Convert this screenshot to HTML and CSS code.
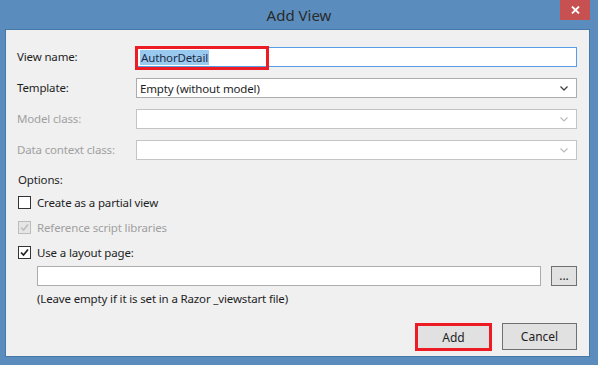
FILE: index.html
```html
<!DOCTYPE html>
<html lang="en">
<head>
  <meta charset="UTF-8">
  <title>Add View</title>
  <link rel="stylesheet" href="styles.css">
</head>
<body>
  <div class="janela">
    <div class="barra-titulo">
      <span class="titulo">Add View</span>
      <button class="fechar">
        <svg width="9" height="8" viewBox="0 0 9 8"><path d="M1 0.5 L8 7.5 M8 0.5 L1 7.5" stroke="#fff" stroke-width="1.8"/></svg>
      </button>
    </div>

    <div class="cliente">
      <div class="campos">
        <span class="rotulo">View name:</span>
        <div class="caixa caixa-ativa">
          <span class="selecionado">AuthorDetail</span>
          <span class="destaque destaque-nome"></span>
        </div>

        <span class="rotulo">Template:</span>
        <div class="caixa lista">
          <span>Empty (without model)</span>
          <svg class="seta" width="8" height="5" viewBox="0 0 8 5"><path d="M0.5 0.5 L4 4 L7.5 0.5" fill="none" stroke="#444" stroke-width="1.3"/></svg>
        </div>

        <span class="rotulo desativado">Model class:</span>
        <div class="caixa lista caixa-desativada">
          <span></span>
          <svg class="seta" width="8" height="5" viewBox="0 0 8 5"><path d="M0.5 0.5 L4 4 L7.5 0.5" fill="none" stroke="#bbb" stroke-width="1.2"/></svg>
        </div>

        <span class="rotulo desativado">Data context class:</span>
        <div class="caixa lista caixa-desativada">
          <span></span>
          <svg class="seta" width="8" height="5" viewBox="0 0 8 5"><path d="M0.5 0.5 L4 4 L7.5 0.5" fill="none" stroke="#bbb" stroke-width="1.2"/></svg>
        </div>
      </div>

      <div class="opcoes">
        <div class="opcoes-titulo">Options:</div>

        <div class="linha-opcao">
          <span class="marcador"></span>
          <span>Create as a partial view</span>
        </div>

        <div class="linha-opcao desativado">
          <span class="marcador marcador-desativado">
            <svg width="11" height="11" viewBox="0 0 11 11"><path d="M2 5.5 L4.5 8 L9 2.5" fill="none" stroke="#bdbdbd" stroke-width="1.6"/></svg>
          </span>
          <span>Reference script libraries</span>
        </div>

        <div class="linha-opcao">
          <span class="marcador">
            <svg width="11" height="11" viewBox="0 0 11 11"><path d="M2 5.5 L4.5 8 L9 2.5" fill="none" stroke="#222" stroke-width="1.7"/></svg>
          </span>
          <span>Use a layout page:</span>
        </div>

        <div class="linha-layout">
          <div class="caixa caixa-layout"></div>
          <button class="botao botao-pequeno">...</button>
        </div>

        <div class="nota">(Leave empty if it is set in a Razor _viewstart file)</div>
      </div>

      <div class="rodape">
        <button class="botao botao-add">Add</button>
        <button class="botao">Cancel</button>
      </div>
    </div>
  </div>
</body>
</html>
```

FILE: styles.css
```css
body {
  margin: 0;
  font-family: 'Noto Sans', sans-serif;
  font-size: 11.5px;
  letter-spacing: -0.15px;
  color: #1e1e1e;
  background: #5a8dbe;
}

.janela {
  width: 598px;
  height: 365px;
  display: flex;
  flex-direction: column;
}

.barra-titulo {
  height: 29px;
  display: flex;
  justify-content: center;
  align-items: center;
  position: relative;
}

.titulo {
  font-size: 15px;
  letter-spacing: 0;
  color: #2a2a2a;
  margin-top: 1px;
}

.fechar {
  position: absolute;
  top: 0;
  right: 8px;
  width: 30px;
  height: 20px;
  border: none;
  padding: 0;
  background: #c75050;
  display: flex;
  justify-content: center;
  align-items: center;
}

.cliente {
  flex: 1;
  margin: 0 8px 8px 5px;
  background: #f0f0f0;
  border: 1px solid #4777a6;
  padding: 17px 12px 5px 11px;
  display: flex;
  flex-direction: column;
}

.campos {
  display: grid;
  grid-template-columns: 119px 1fr;
  grid-auto-rows: 20px;
  row-gap: 11px;
  align-items: center;
}

.rotulo {
  line-height: 20px;
}

.desativado {
  color: #a0a0a0;
}

.caixa {
  height: 20px;
  box-sizing: border-box;
  background: #fff;
  border: 1px solid #acacac;
  display: flex;
  align-items: center;
  padding: 0 3px;
  position: relative;
}

.caixa-ativa {
  border-color: #569de5;
}

.caixa-desativada {
  border-color: #c4c4c4;
}

.selecionado {
  background: #99c9ef;
  color: #1b2b45;
  line-height: 15px;
  padding: 0 1px;
}

.destaque {
  position: absolute;
  border: 3px solid #ed1c24;
}

.destaque-nome {
  left: -2px;
  top: -2px;
  width: 128px;
  height: 18px;
}

.lista {
  justify-content: space-between;
  padding-right: 8px;
}

.opcoes {
  margin-top: 11px;
  padding-left: 1px;
}

.opcoes-titulo {
  line-height: 17px;
  margin-bottom: 2px;
}

.linha-opcao {
  height: 25px;
  display: flex;
  align-items: center;
  gap: 6px;
}

.marcador {
  width: 13px;
  height: 13px;
  box-sizing: border-box;
  border: 1px solid #333;
  background: #fff;
  display: flex;
  justify-content: center;
  align-items: center;
}

.marcador-desativado {
  border-color: #bcbcbc;
  background: #e6e6e6;
}

.linha-layout {
  display: flex;
  gap: 10px;
  margin-left: 19px;
  margin-top: 1px;
}

.caixa-layout {
  flex: 1;
}

.botao {
  width: 75px;
  height: 27px;
  background: #e1e1e1;
  border: 1px solid #707070;
  font-family: inherit;
  font-size: 12px;
  color: #1e1e1e;
  padding: 0;
}

.botao-pequeno {
  width: 26px;
  height: 20px;
  line-height: 10px;
}

.nota {
  margin-left: 19px;
  line-height: 20px;
  margin-top: 3px;
}

.rodape {
  margin-top: auto;
  display: flex;
  justify-content: flex-end;
  gap: 10px;
}

.botao-add {
  border: 3px solid #ed1c24;
  width: 77px;
  height: 28px;
}
```
